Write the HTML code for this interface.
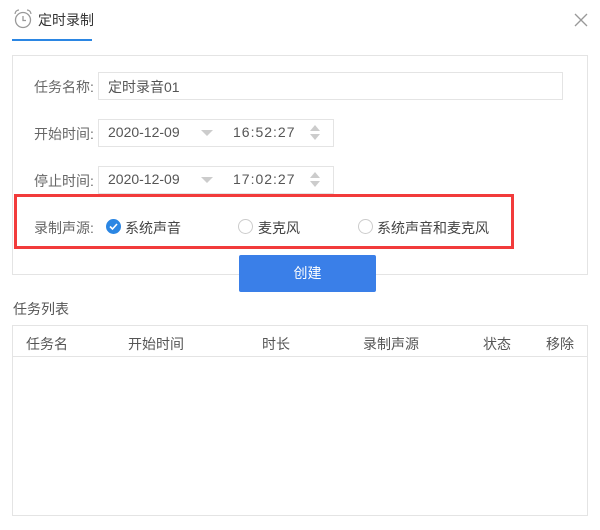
<!DOCTYPE html>
<html><head><meta charset="utf-8"><style>
body{margin:0;width:600px;height:530px;background:#fff;position:relative;font-family:"Liberation Sans","Noto Sans CJK SC",sans-serif;font-size:14px;color:#555;overflow:hidden}
.a{position:absolute}
.box{position:absolute;border:1px solid #e4e4e4;box-sizing:border-box}
.lbl{position:absolute;color:#666;font-size:14px}
.radio{position:absolute;width:15px;height:15px;border-radius:50%;border:1px solid #ccc;box-sizing:border-box;background:#fff}
</style></head><body>
<svg class="a" style="left:12px;top:8px" width="22" height="22" viewBox="0 0 22 22"><circle cx="11" cy="12" r="7.5" fill="none" stroke="#999" stroke-width="1.3"/><path d="M11 8v4.5h3" fill="none" stroke="#999" stroke-width="1.3"/><path d="M3 6a4 4 0 0 1 4-4M19 6a4 4 0 0 0-4-4" fill="none" stroke="#999" stroke-width="1.2"/></svg>
<div class="a" style="left:38px;top:10px;font-size:14px;color:#333">定时录制</div>
<div class="a" style="left:12px;top:39px;width:80px;height:2px;background:#2b86e3"></div>
<svg class="a" style="left:574px;top:13px" width="14" height="14"><path d="M1 1L13 13M13 1L1 13" stroke="#999" stroke-width="1.3"/></svg>
<div class="box" style="left:12px;top:55px;width:576px;height:220px"></div>
<div class="lbl" style="left:34px;top:77px">任务名称:</div>
<div class="box" style="left:98px;top:72px;width:465px;height:28px"></div>
<div class="a" style="left:108px;top:77px">定时录音01</div>
<div class="lbl" style="left:34px;top:124px">开始时间:</div>
<div class="box" style="left:98px;top:119px;width:236px;height:28px"></div>
<div class="a" style="left:108px;top:124px">2020-12-09</div>
<div class="a" style="left:201px;top:130px;border:6px solid transparent;border-top:6px solid #ccc;border-bottom:0"></div>
<div class="a" style="left:233px;top:124px;letter-spacing:1px">16:52:27</div>
<div class="a" style="left:310px;top:125px;border:5px solid transparent;border-bottom:6px solid #ccc;border-top:0"></div>
<div class="a" style="left:310px;top:134px;border:5px solid transparent;border-top:6px solid #ccc;border-bottom:0"></div>
<div class="lbl" style="left:34px;top:171px">停止时间:</div>
<div class="box" style="left:98px;top:166px;width:236px;height:28px"></div>
<div class="a" style="left:108px;top:171px">2020-12-09</div>
<div class="a" style="left:201px;top:177px;border:6px solid transparent;border-top:6px solid #ccc;border-bottom:0"></div>
<div class="a" style="left:233px;top:171px;letter-spacing:1px">17:02:27</div>
<div class="a" style="left:310px;top:172px;border:5px solid transparent;border-bottom:6px solid #ccc;border-top:0"></div>
<div class="a" style="left:310px;top:181px;border:5px solid transparent;border-top:6px solid #ccc;border-bottom:0"></div>
<div class="a" style="left:14px;top:194px;width:500px;height:55px;border:3px solid #f23b3b;box-sizing:border-box"></div>
<div class="lbl" style="left:34px;top:218px">录制声源:</div>
<div class="radio" style="left:106px;top:219px;border-color:#2b86e3;background:#2b86e3"></div>
<svg class="a" style="left:106px;top:219px" width="15" height="15"><path d="M4 7.5l2.5 2.5 4.5-5" fill="none" stroke="#fff" stroke-width="1.6"/></svg>
<div class="a" style="left:125px;top:218px;color:#444">系统声音</div>
<div class="radio" style="left:238px;top:219px"></div>
<div class="a" style="left:258px;top:218px;color:#444">麦克风</div>
<div class="radio" style="left:358px;top:219px"></div>
<div class="a" style="left:377px;top:218px;color:#444">系统声音和麦克风</div>
<div class="a" style="left:239px;top:255px;width:137px;height:37px;background:#3a7fe8;border-radius:2px;color:#fff;text-align:center;line-height:36px">创建</div>
<div class="a" style="left:13px;top:299px;color:#555">任务列表</div>
<div class="box" style="left:12px;top:325px;width:576px;height:191px"></div>
<div class="a" style="left:12px;top:356px;width:576px;height:1px;background:#e4e4e4"></div>
<div class="a" style="left:26px;top:334px">任务名</div>
<div class="a" style="left:128px;top:334px">开始时间</div>
<div class="a" style="left:262px;top:334px">时长</div>
<div class="a" style="left:363px;top:334px">录制声源</div>
<div class="a" style="left:483px;top:334px">状态</div>
<div class="a" style="left:546px;top:334px">移除</div>
</body></html>
